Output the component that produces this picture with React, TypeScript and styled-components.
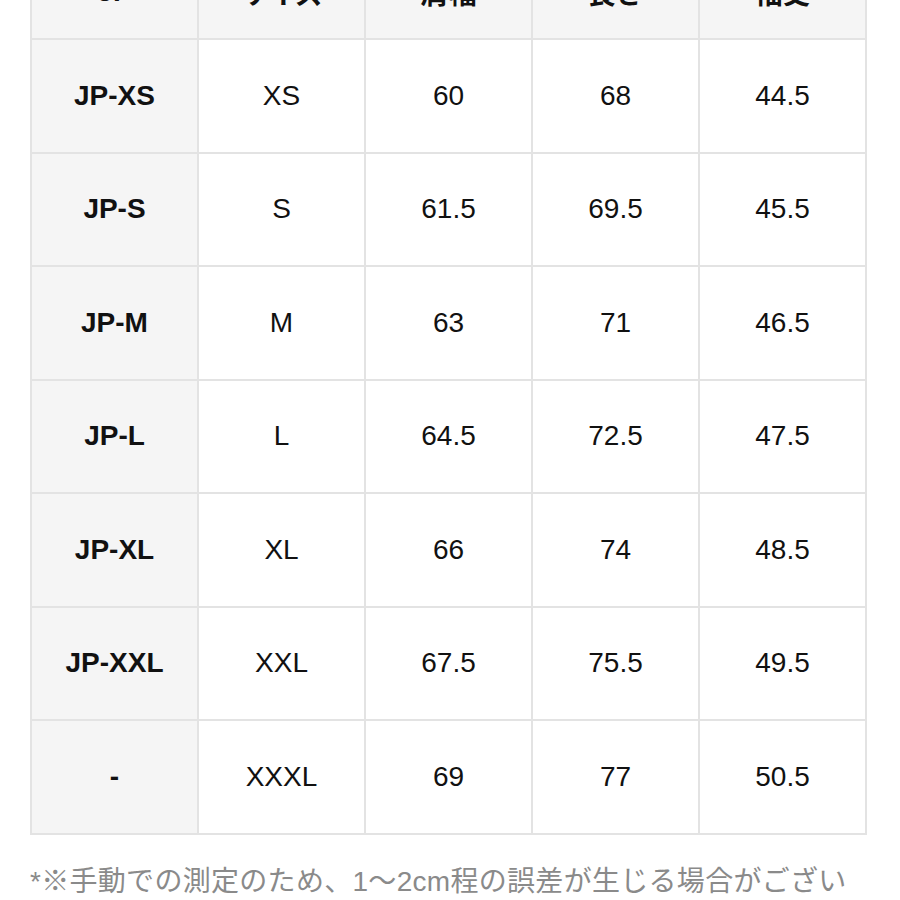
import React from "react";
import styled, { createGlobalStyle } from "styled-components";

const Global = createGlobalStyle`
  html, body { margin: 0; padding: 0; background: #ffffff; overflow: hidden; }
  body { font-family: "Liberation Sans", Arial, "Noto Sans CJK JP", sans-serif; }
`;

const Page = styled.div`
  width: 900px;
  height: 900px;
  overflow: hidden;
  padding: 0 20px 0 30px;
  box-sizing: border-box;
`;

const Table = styled.table`
  width: 837px;
  margin-top: -56px;
  border-collapse: collapse;
  table-layout: fixed;
`;

const HeadCell = styled.th`
  height: 92px;
  background: #f5f5f5;
  border: 2px solid #e3e3e3;
  color: #111;
  font-size: 28px;
  font-weight: 700;
  text-align: center;
  vertical-align: middle;
  padding: 0;
  font-family: "Liberation Sans", Arial, "Noto Sans CJK JP", sans-serif;
`;

const Cell = styled.td<{ $label?: boolean }>`
  height: 111.5px;
  background: ${(p) => (p.$label ? "#f5f5f5" : "#ffffff")};
  border: 2px solid #e3e3e3;
  color: #111;
  font-size: 28px;
  font-weight: ${(p) => (p.$label ? 700 : 400)};
  text-align: center;
  vertical-align: middle;
  padding: 0;
`;

const Note = styled.p`
  margin: 25px 0 0;
  width: 825px;
  font-size: 28px;
  letter-spacing: 0.3px;
  line-height: 44px;
  color: #8a8a8a;
  font-family: "Liberation Sans", Arial, "Noto Sans CJK JP", sans-serif;
`;

const headers = ["JP", "サイズ", "肩幅", "長さ", "袖丈"];

const rows: string[][] = [
  ["JP-XS", "XS", "60", "68", "44.5"],
  ["JP-S", "S", "61.5", "69.5", "45.5"],
  ["JP-M", "M", "63", "71", "46.5"],
  ["JP-L", "L", "64.5", "72.5", "47.5"],
  ["JP-XL", "XL", "66", "74", "48.5"],
  ["JP-XXL", "XXL", "67.5", "75.5", "49.5"],
  ["-", "XXXL", "69", "77", "50.5"],
];

export default function App() {
  return (
    <Page>
      <Global />
      <Table>
        <thead>
          <tr>
            {headers.map((h) => (
              <HeadCell key={h}>{h}</HeadCell>
            ))}
          </tr>
        </thead>
        <tbody>
          {rows.map((r) => (
            <tr key={r[1]}>
              {r.map((c, i) => (
                <Cell key={i} $label={i === 0}>
                  {c}
                </Cell>
              ))}
            </tr>
          ))}
        </tbody>
      </Table>
      <Note>*※手動での測定のため、1～2cm程の誤差が生じる場合がございます。</Note>
    </Page>
  );
}
